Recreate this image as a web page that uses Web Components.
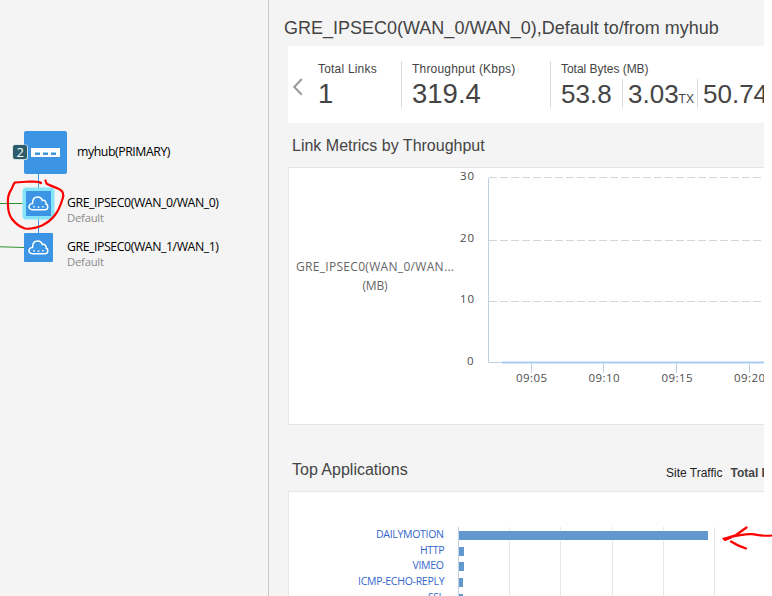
<!DOCTYPE html>
<html lang="en">
<head>
<meta charset="utf-8">
<title>Link metrics</title>
<style>
html,body{margin:0;height:100%;overflow:hidden;background:#fff}
</style>
</head>
<body>
<app-shell>
  <link-topology slot="side"></link-topology>
  <page-title>GRE_IPSEC0(WAN_0/WAN_0),Default to/from myhub</page-title>
  <stat-bar>
    <stat-item label="Total Links" style="width:83px;--ls:.2px">1</stat-item>
    <stat-item label="Throughput (Kbps)" divided style="width:138px;--ls:.2px">319.4</stat-item>
    <stat-item label="Total Bytes (MB)" divided style="width:203px;--ls:-.03px">
      <stat-part style="width:61px">53.8</stat-part><stat-part divided unit="TX" style="width:69px">3.03</stat-part><stat-part divided style="width:61px">50.74</stat-part>
    </stat-item>
  </stat-bar>
  <section-head style="height:44px">Link Metrics by Throughput</section-head>
  <chart-card style="height:258px"><throughput-chart></throughput-chart></chart-card>
  <section-head style="height:66px;--pad:22px">Top Applications<traffic-switch slot="end"></traffic-switch></section-head>
  <chart-card style="height:107px"><apps-chart></apps-chart></chart-card>
</app-shell>
<ink-notes></ink-notes>
<script>
function define(name, html, init) {
  customElements.define(name, class extends HTMLElement {
    connectedCallback() {
      if (this.shadowRoot) return;
      const root = this.attachShadow({mode: 'open'});
      root.innerHTML = html;
      if (init) init(this, root);
    }
  });
}

define('app-shell', `<style>
:host{display:flex;width:764px;height:596px;overflow:hidden;background:#f4f4f4;color:#444;font-family:"Liberation Sans",Arial,sans-serif}
aside{flex:none;width:268px;border-right:1px solid #c8c8c8}
main{flex:1;min-width:0;display:flex;flex-direction:column;padding-left:19px;overflow:hidden}
</style><aside><slot name="side"></slot></aside><main><slot></slot></main>`);

define('page-title', `<style>
:host{display:block;flex:none;height:46px;line-height:56px;margin-left:-4px;font-size:18px;white-space:nowrap}
</style><slot></slot>`);

define('stat-bar', `<style>
:host{display:flex;flex:none;height:77px;background:#fff;overflow:hidden;box-sizing:border-box;padding-top:15px}
svg{flex:none;width:30px;height:47px}
</style><svg viewBox="0 0 30 47"><path d="M13.8 18L6.3 26L13.8 33.7" fill="none" stroke="#999" stroke-width="2"/></svg><slot></slot>`);

define('stat-item', `<style>
:host{display:block;flex:none;height:47px;white-space:nowrap}
:host([divided]){border-left:1px solid #ddd;padding-left:10px}
.l{font-size:12px;line-height:16px;height:18px;letter-spacing:var(--ls,0)}
.v{display:flex;font-size:27.5px;line-height:29px;height:29px}
</style><div class="l"></div><div class="v"><slot></slot></div>`, (el, r) => {
  r.querySelector('.l').textContent = el.getAttribute('label');
});

define('stat-part', `<style>
:host{display:block;flex:none;height:29px;line-height:30px;font-size:26px;white-space:nowrap}
:host([divided]){border-left:1px solid #ddd;padding-left:5px}
span{font-size:12px}
</style><slot></slot><span></span>`, (el, r) => {
  r.querySelector('span').textContent = el.getAttribute('unit') || '';
});

define('section-head', `<style>
:host{display:flex;flex:none;box-sizing:border-box;padding:var(--pad,0) 0 0 4px;line-height:45px;font-size:16px;justify-content:space-between;white-space:nowrap}
</style><span><slot></slot></span><slot name="end"></slot>`);

define('traffic-switch', `<style>
:host{display:flex;gap:8px;width:98px;overflow:hidden;font-size:12px;line-height:52px;color:#222}
b{color:#444}
</style><span>Site Traffic</span><b>Total Bytes</b>`);

define('chart-card', `<style>
:host{display:block;flex:none;box-sizing:border-box;background:#fff;border:1px solid #e6e6e6;border-right:0;overflow:hidden}
</style><slot></slot>`);

/* Chart drawings use page coordinates through their viewBox. */
define('throughput-chart', `<style>
:host{display:block}svg{display:block;font-family:"Open Sans","Noto Sans",sans-serif;font-size:11.5px;fill:#4c4c4c}
.g{stroke:#d6d6d6;stroke-dasharray:8 3}.t{stroke:#c0d0e0}.n{font-weight:500;font-size:12px;fill:#666}
</style><svg width="475" height="256" viewBox="289 168 475 256">
<path class="g" d="M489 177.5H764M489 240.5H764M489 301.5H764"/>
<path class="t" fill="none" d="M488.5 178V362.5H764M531.5 363v10M603.5 363v10M676.5 363v10M749.5 363v10"/>
<path d="M502 362.5H764" stroke="#a6cdf2" stroke-width="2"/>
<text x="460" y="180" textLength="14">30</text><text x="460" y="242" textLength="14">20</text><text x="460" y="303" textLength="14">10</text><text x="467" y="365">0</text>
<text x="516" y="382" textLength="31">09:05</text><text x="588.5" y="382" textLength="31">09:10</text><text x="661.5" y="382" textLength="31">09:15</text><text x="734" y="382" textLength="31">09:20</text>
<g class="n"><text x="296" y="271" textLength="158">GRE_IPSEC0(WAN_0/WAN...</text><text x="362.5" y="290" textLength="25">(MB)</text></g>
</svg>`);

define('apps-chart', `<style>
:host{display:block}svg{display:block;font-family:"Open Sans","Noto Sans",sans-serif;font-size:10.5px;fill:#3366cc}
</style><svg width="475" height="105" viewBox="289 492 475 105">
<path stroke="#e6e6e6" d="M509.5 527V597M560.5 527V597M612.5 527V597M663.5 527V597M714.5 527V597"/>
<path stroke="#c0d0e0" d="M458.5 527V597"/>
<path d="M459 530H709V541H459z" fill="#fff"/>
<g fill="#6398ce"><path d="M459 531h249v9h-249zM459 547h5v9h-5zM459 562h5v9h-5zM459 578h4v9h-4zM459 594h4v9h-4z"/></g>
<text x="376" y="538" textLength="68">DAILYMOTION</text><text x="420" y="554" textLength="24.5">HTTP</text><text x="412.5" y="569" textLength="31.5">VIMEO</text><text x="358" y="585" textLength="86.5">ICMP-ECHO-REPLY</text><text x="428" y="601" textLength="16">SSL</text>
</svg>`);

define('link-topology', `<style>
:host{display:block}svg{display:block;font-family:"Open Sans","Noto Sans",sans-serif;font-size:12.3px}
.c{fill:none;stroke:#fff;stroke-width:1.5}
</style><svg width="268" height="596" viewBox="0 0 268 596">
<defs><g id="cloud"><path class="c" d="M-6 6.3C-9 6.3-10 4-9.3 2C-8.7.2-7 0-6 0C-6-4-4-6.5-.8-6.5C2-6.5 3.2-5 3.8-3C6.5-3.8 8-1.5 7.5.6C10 1.2 10 6.3 6.5 6.3Z"/><path fill="#fff" d="M-5.2 2.5h1.5v1.5h-1.5zM-.7 3h1.5v1.5h-1.5zM3.6 2.5h1.5v1.5h-1.5z"/></g></defs>
<path d="M38.5 170V240" stroke="#3b94e4"/>
<path d="M0 203.5H24M0 246.8L24 247.5" stroke="#2f922f" fill="none"/>
<rect x="24" y="131" width="43" height="43" rx="2" fill="#3b94e4"/>
<rect x="31" y="148" width="29" height="9" fill="#fff"/>
<path d="M35 152.5h5v2.5h-5zM43 152.5h5v2.5h-5zM51 152.5h5v2.5h-5z" fill="#3b94e4"/>
<rect x="12.5" y="144.5" width="15.5" height="15.5" rx="3" fill="#cfdcdf"/><rect x="13" y="145" width="14" height="14" rx="2" fill="#2d5d6b"/>
<text x="16.5" y="157" font-size="13" fill="#fff">2</text>
<rect x="22.5" y="187.5" width="32" height="32" rx="4" fill="#85e4fa"/>
<rect x="26" y="191" width="25" height="25" fill="#3b94e4"/><use href="#cloud" x="38.5" y="203.5"/>
<rect x="24" y="233" width="29" height="29" rx="1" fill="#3b94e4"/><use href="#cloud" x="38.5" y="247.5"/>
<text x="77" y="156" textLength="93.5">myhub(PRIMARY)</text>
<text x="67" y="207" textLength="152">GRE_IPSEC0(WAN_0/WAN_0)</text>
<text x="67" y="251" textLength="152">GRE_IPSEC0(WAN_1/WAN_1)</text>
<g fill="#8c8c8c" font-size="11.3"><text x="67" y="222" textLength="37">Default</text><text x="67" y="266" textLength="37">Default</text></g>
</svg>`);

/* Hand-drawn red marks floating above the page. */
define('ink-notes', `<style>
:host{position:absolute;left:0;top:0;width:772px;height:596px;pointer-events:none}
path{fill:none;stroke:#f00;stroke-width:2.2;stroke-linecap:round;stroke-linejoin:round}
</style><svg width="772" height="596">
<path d="M41 183C38 181 34 182 30 181.5L15 182.5C13 184 13 187 11 190C8 194 7.5 199 8 205C8 210 9 215 12 219C15 223 20 227 25 228.5C31 229.5 37 227.500 42 225.5C47 223 52 219 55 215C59 210 61 204 62.5 199C64 195 63.5 191 59 189C54 187 49 185 46.5 183.5L45.5 180.5"/>
<path d="M772 535.5C764 536.5 759 535 752 534.2C744 533.5 735 536 725 538.5L736 535L746.5 527.5M725 538.5L723.5 538.5L725 540L731 537.5M731 541.5Q738 546 746 548.5"/>
</svg>`);
</script>
</body>
</html>
